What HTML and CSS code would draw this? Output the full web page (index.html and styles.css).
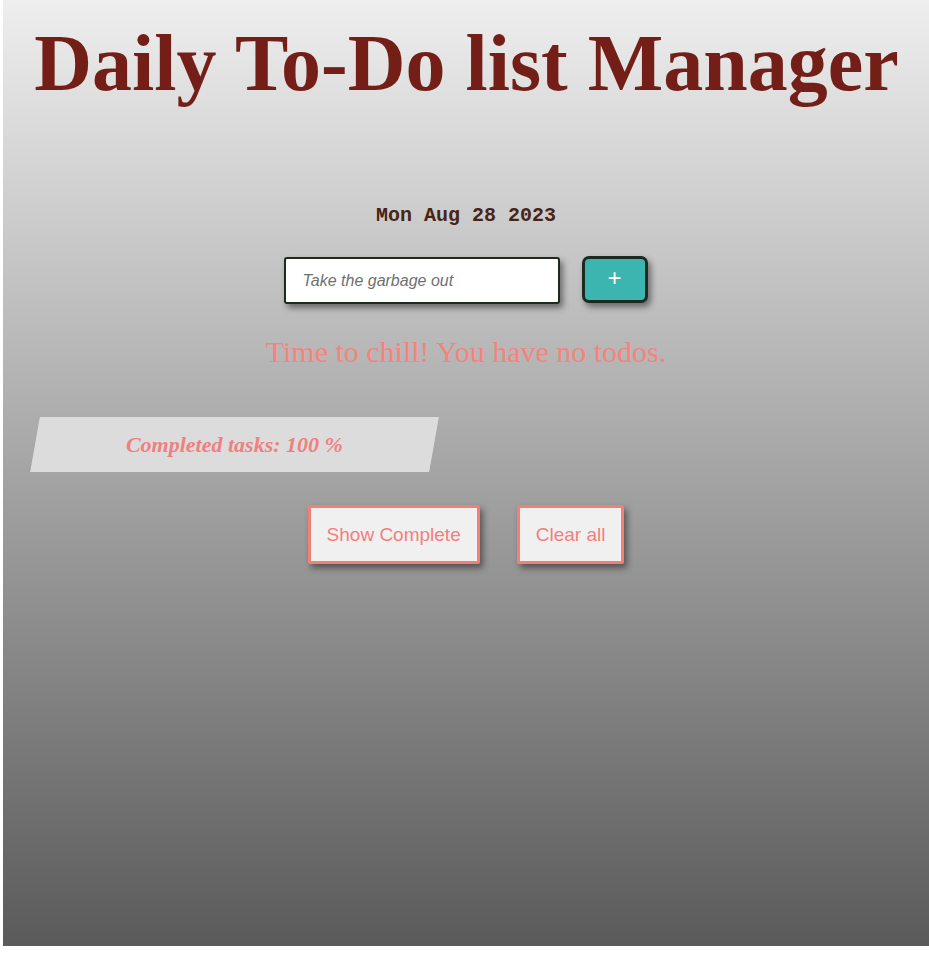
FILE: index.html
```html
<!DOCTYPE html>
<html>
<head>
<meta charset="utf-8">
<link rel="stylesheet" href="styles.css">
</head>
<body>
<div class="app">
  <h1 class="title">Daily To-Do list Manager</h1>
  <div class="date">Mon Aug 28 2023</div>
  <form class="add-form">
    <input class="todo-input" type="text" placeholder="Take the garbage out">
    <button class="add-btn" type="button">+</button>
  </form>
  <p class="empty">Time to chill! You have no todos.</p>
  <div class="progress-row">
    <div class="progress"><span class="progress-text">Completed tasks: 100 %</span></div>
  </div>
  <div class="actions">
    <button class="action-btn" type="button">Show Complete</button>
    <button class="action-btn" type="button">Clear all</button>
  </div>
</div>
</body>
</html>
```
FILE: styles.css
```css
html, body {
  margin: 0;
  padding: 0;
  background: #ffffff;
}
.app {
  margin-left: 3px;
  height: 946px;
  background: linear-gradient(to bottom, #eeeeee 0%, #5a5a5a 100%);
  display: flex;
  flex-direction: column;
  align-items: center;
  box-sizing: border-box;
  padding-top: 18px;
}
.title {
  margin: 0;
  font-family: "Liberation Serif", "Times New Roman", serif;
  font-weight: bold;
  font-size: 80px;
  line-height: 90px;
  color: #731f17;
  padding-left: 1px;
}
.date {
  margin-top: 96px;
  font-family: "Liberation Mono", "Courier New", monospace;
  font-weight: bold;
  font-size: 20px;
  line-height: 24px;
  color: #4a2412;
}
.add-form {
  margin-top: 29px;
  display: flex;
  gap: 22px;
  align-items: flex-start;
  margin-left: -1px;
}
.todo-input {
  width: 276px;
  height: 47px;
  box-sizing: border-box;
  border: 2px solid #1c2a20;
  border-radius: 3px;
  background: #ffffff;
  padding: 0 17px;
  font-family: "Liberation Sans", Arial, sans-serif;
  font-size: 16px;
  box-shadow: 3px 4px 6px rgba(0,0,0,0.45);
  outline: none;
}
.todo-input::placeholder {
  font-style: italic;
  color: #6f6f6f;
}
.add-btn {
  width: 66px;
  height: 47px;
  margin-top: -1px;
  box-sizing: border-box;
  background: #3cb4b0;
  border: 3px solid #1a2a1f;
  border-radius: 7px;
  color: #ffffff;
  font-family: "Liberation Sans", Arial, sans-serif;
  font-size: 24px;
  line-height: 1;
  padding: 0 0 4px;
  box-shadow: 3px 4px 6px rgba(0,0,0,0.45);
}
.empty {
  margin: 28px 0 0;
  font-family: "Liberation Serif", "Times New Roman", serif;
  font-size: 30px;
  line-height: 40px;
  color: #f4847c;
}
.progress-row {
  align-self: stretch;
  margin-top: 45px;
  padding-left: 32px;
}
.progress {
  width: 399px;
  height: 55px;
  background: #dcdcdc;
  transform: skewX(-10deg);
  display: flex;
  align-items: center;
  justify-content: center;
}
.progress-text {
  transform: skewX(10deg);
  font-family: "Liberation Serif", "Times New Roman", serif;
  font-weight: bold;
  font-style: italic;
  font-size: 22px;
  color: #f08080;
}
.actions {
  margin-top: 33px;
  display: flex;
  gap: 37px;
}
.action-btn {
  height: 59px;
  box-sizing: border-box;
  padding: 0 16px;
  background: #f0f0f0;
  border: 3px solid #f08078;
  border-radius: 2px;
  color: #f08080;
  font-family: "Liberation Sans", Arial, sans-serif;
  font-size: 19px;
  box-shadow: 3px 4px 6px rgba(0,0,0,0.45);
}
```
